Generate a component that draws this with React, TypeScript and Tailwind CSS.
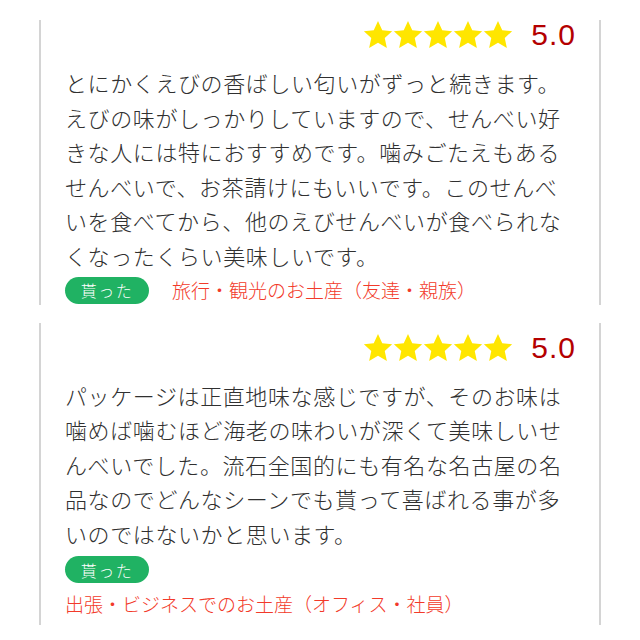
import React from "react";

type Review = {
  lines: string[];
  purpose: string;
  stacked: boolean;
};

const reviews: Review[] = [
  {
    lines: [
      "とにかくえびの香ばしい匂いがずっと続きます。",
      "えびの味がしっかりしていますので、せんべい好",
      "きな人には特におすすめです。噛みごたえもある",
      "せんべいで、お茶請けにもいいです。このせんべ",
      "いを食べてから、他のえびせんべいが食べられな",
      "くなったくらい美味しいです。",
    ],
    purpose: "旅行・観光のお土産（友達・親族）",
    stacked: false,
  },
  {
    lines: [
      "パッケージは正直地味な感じですが、そのお味は",
      "噛めば噛むほど海老の味わいが深くて美味しいせ",
      "んべいでした。流石全国的にも有名な名古屋の名",
      "品なのでどんなシーンでも貰って喜ばれる事が多",
      "いのではないかと思います。",
    ],
    purpose: "出張・ビジネスでのお土産（オフィス・社員）",
    stacked: true,
  },
];

const Star: React.FC = () => (
  <svg viewBox="0 0 24 24" className="w-[30px] h-[30px]" fill="#ffe600">
    <path d="M12 0.8l3.4 7.3 7.9.8-5.9 5.4 1.7 8L12 18.2l-7.1 4.1 1.7-8L.7 8.9l7.9-.8z" />
  </svg>
);

const Badge: React.FC = () => (
  <span className="inline-flex items-center justify-center w-[84px] h-[27px] rounded-full bg-[#20b263] text-white text-[16px] tracking-[1.5px] font-light shrink-0">
    貰った
  </span>
);

const ReviewCard: React.FC<{ review: Review; top: string }> = ({ review, top }) => (
  <div className={`border-x-2 border-[#d4d4d4] pl-[24px] pr-[23px] ${top}`}>
    <div className="flex items-center justify-end h-[30px]">
      <div className="flex">
        {[0, 1, 2, 3, 4].map(i => (
          <Star key={i} />
        ))}
      </div>
      <span className="ml-[18px] text-[30px] tracking-[1px] text-[#b40000] leading-none font-['Liberation_Sans',Arial,sans-serif]">
        5.0
      </span>
    </div>
    <div className="mt-[15px] text-[22px] leading-[34.5px] tracking-[0.6px] text-[#303030] font-light">
      {review.lines.map((l, i) => (
        <div key={i} className="whitespace-nowrap">
          {l}
        </div>
      ))}
    </div>
    {review.stacked ? (
      <div className="mt-[6px] pb-[9px]">
        <Badge />
        <div className="mt-[9px] text-[19px] leading-[24px] text-[#f23a2a] font-light whitespace-nowrap">
          {review.purpose}
        </div>
      </div>
    ) : (
      <div className="mt-[4px] flex items-center gap-[23px]">
        <Badge />
        <span className="text-[19px] text-[#f23a2a] font-light whitespace-nowrap">{review.purpose}</span>
      </div>
    )}
  </div>
);

export default function App() {
  return (
    <div className="w-[640px] h-[640px] bg-white overflow-hidden font-['Noto_Sans_CJK_JP','Noto_Sans',sans-serif]">
      <div className="pt-[12px] pl-[39px] w-[601px] flex flex-col gap-[18px]">
        <div className="pt-[8px]">
          <ReviewCard review={reviews[0]} top="" />
        </div>
        <div>
          <ReviewCard review={reviews[1]} top="pt-[10px]" />
        </div>
      </div>
    </div>
  );
}
